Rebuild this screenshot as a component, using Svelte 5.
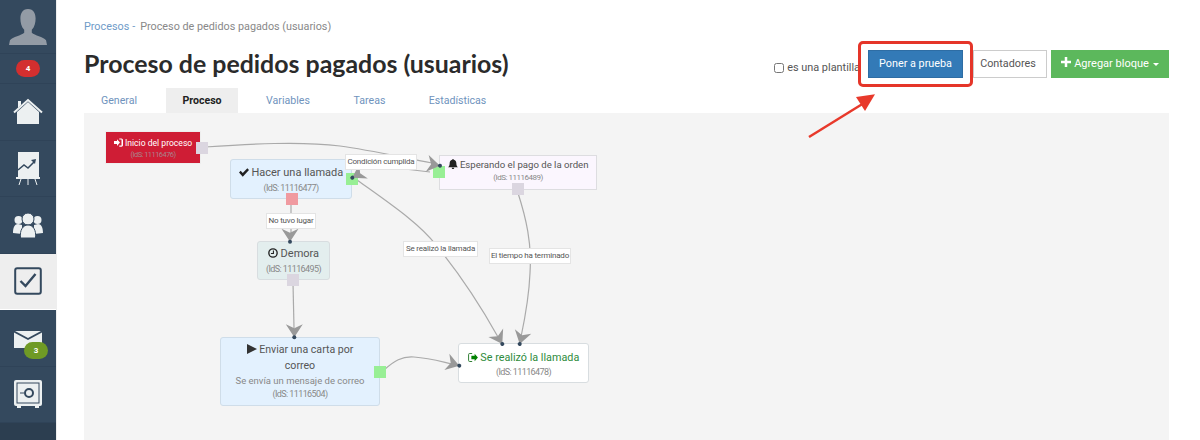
<script>
  const tabs = [
    { name: 'General', w: 70 },
    { name: 'Proceso', w: 72 },
    { name: 'Variables', w: 76 },
    { name: 'Tareas', w: 63 },
    { name: 'Estadísticas', w: 89 }
  ];

  // node boxes, relative to the canvas (84, 113)
  const nodes = [
    { id: 'start', icon: 'in', title: 'Inicio del proceso', ids: '(IdS: 11116476)', x: 21, y: 18, w: 96, h: 33 },
    { id: 'call', icon: 'check', title: 'Hacer una llamada', ids: '(IdS: 11116477)', x: 146, y: 46, w: 122, h: 40 },
    { id: 'wait', icon: 'bell', title: 'Esperando el pago de la orden', ids: '(IdS: 11116489)', x: 355, y: 42, w: 158, h: 35 },
    { id: 'delay', icon: 'clock', title: 'Demora', ids: '(IdS: 11116495)', x: 173, y: 128, w: 73, h: 39 },
    { id: 'mail', icon: 'play', title: 'Enviar una carta por correo', sub: 'Se envía un mensaje de correo', ids: '(IdS: 11116504)', x: 136, y: 224, w: 160, h: 69 },
    { id: 'end', icon: 'out', title: 'Se realizó la llamada', ids: '(IdS: 11116478)', x: 374, y: 230, w: 131, h: 40 }
  ];

  const ports = [
    { x: 112, y: 29, c: '#dbd6e0' },
    { x: 262, y: 60, c: '#98ef95' },
    { x: 202, y: 80, c: '#f09aa0' },
    { x: 349, y: 53, c: '#98ef95' },
    { x: 428, y: 70, c: '#dbd6e0' },
    { x: 203, y: 161, c: '#dbd6e0' },
    { x: 290, y: 253, c: '#98ef95' }
  ];

  const labels = [
    { text: 'Condición cumplida', x: 261, y: 41, w: 72 },
    { text: 'No tuvo lugar', x: 182, y: 100, w: 50 },
    { text: 'Se realizó la llamada', x: 319, y: 128, w: 75 },
    { text: 'El tiempo ha terminado', x: 405, y: 135, w: 82 }
  ];

  const edges = [
    'M121 34 C166 31 216 28 256 33 C286 37 316 44 348 50',
    'M270 50 L346 59',
    'M207 90 L207 122',
    'M434 80 C442 105 448 130 446 160 C445 185 441 205 437 224',
    'M209 170 L210 215',
    'M273 67 C305 90 335 110 352 132 C375 160 395 190 414 224',
    'M300 257 C310 248 318 243 330 244 C345 245 355 248 368 251'
  ];

  // arrow heads: tip point and rotation in degrees
  const heads = [
    { x: 356, y: 52.700, r: 100 },
    { x: 206, y: 128.700, r: 180 },
    { x: 268.300, y: 64.700, r: -120 },
    { x: 418.300, y: 231, r: 150 },
    { x: 435.700, y: 231, r: 195 },
    { x: 210.300, y: 224.300, r: 180 },
    { x: 375.300, y: 252.700, r: 107 }
  ];
</script>

<div class="page">
  <aside class="side">
    <div class="side-item avatar">
      <svg viewBox="0 0 40 40" width="38" height="38"><path fill="#939ba5" d="M20 1c6 0 8 5 8 10 0 4-1 9-4 12v3c3 3 12 4 15 8l1 5H0l1-5c3-4 12-5 15-8v-3c-3-3-4-8-4-12 0-5 2-10 8-10z"/></svg>
    </div>
    <div class="side-item count"><span class="pill">4</span></div>
    <div class="side-item">
      <svg viewBox="0 0 30 27" width="30" height="27"><path fill="#ecf0f1" d="M4 14 15 4l11 10v12H4z"/><path fill="none" stroke="#ecf0f1" stroke-width="2" d="M1 14.500 15 2l14 12.500"/><path fill="#ecf0f1" d="M5 3h3v4l-3 3z"/></svg>
    </div>
    <div class="side-item">
      <svg viewBox="0 0 24 33" width="24" height="33"><path fill="#ecf0f1" d="M2 0h21v25H2z"/><path fill="none" stroke="#34495e" stroke-width="1.500" d="M2 18l6-5 4 3 6-6"/><path fill="#34495e" d="M15 8l5-1-1 5z"/><path fill="#ecf0f1" d="M0 25h24v2H0z"/><path stroke="#ecf0f1" fill="none" d="M5 27l-2 6M12 27v6M19 27l2 6"/></svg>
    </div>
    <div class="side-item">
      <svg viewBox="0 0 30 26" width="30" height="26"><g fill="#ecf0f1"><circle cx="5.500" cy="8" r="4"/><circle cx="24.500" cy="8" r="4"/><path d="M0 21c0-6 2-9 5-9l4 1v9zM30 21c0-6-2-9-5-9l-4 1v9z"/><g stroke="#34495e"><circle cx="15" cy="7" r="6"/><path d="M7.500 26c-1-8 2.500-13 7.500-13s8.500 5 7.500 13z"/></g></g></svg>
    </div>
    <div class="side-item active">
      <svg viewBox="0 0 28 28" width="28" height="28"><rect x="1.200" y="1.200" width="25.600" height="25.600" rx="2" fill="none" stroke="#34495e" stroke-width="2"/><path fill="none" stroke="#34495e" stroke-width="2.400" d="M6.500 14l5 5 10-12"/></svg>
    </div>
    <div class="side-item">
      <svg class="env" viewBox="0 0 28 17" width="28" height="17"><path fill="#ecf0f1" d="M0 1.500 14 9l14-7.500V17H0zM1 0h26L14 7z"/></svg>
      <span class="pill green">3</span>
    </div>
    <div class="side-item">
      <svg viewBox="0 0 28 28" width="28" height="28"><rect x="0" y="0" width="28" height="26" rx="2" fill="#ecf0f1"/><rect x="3" y="3" width="22" height="20" fill="none" stroke="#34495e" stroke-width="1"/><circle cx="15" cy="13" r="4" fill="none" stroke="#34495e" stroke-width="2"/><path stroke="#34495e" d="M6 13h4"/><path fill="#ecf0f1" d="M3 26h4v2H3zM21 26h4v2h-4z"/></svg>
    </div>
  </aside>

  <main class="main">
    <div class="crumbs"><a href="#p">Procesos</a><span class="dash">-</span><span>Proceso de pedidos pagados (usuarios)</span></div>

    <div class="head">
      <h1>Proceso de pedidos pagados (usuarios)</h1>
      <div class="actions">
        <label class="tpl"><input type="checkbox" />es una plantilla</label>
        <div class="marked">
          <button class="btn blue">Poner a prueba</button>
          <span class="mark"></span>
        </div>
        <button class="btn plain">Contadores</button>
        <button class="btn green">
          <svg viewBox="0 0 12 12" width="10" height="10"><path fill="#fff" d="M4.500 0h3v4.500H12v3H7.500V12h-3V7.500H0v-3h4.500z"/></svg>
          Agregar bloque
          <i class="caret"></i>
        </button>
      </div>
    </div>

    <nav class="tabs">
      {#each tabs as tab}
        <span class="tab" class:current={tab.name === 'Proceso'} style="width:{tab.w}px">{tab.name}</span>
      {/each}
    </nav>

    <section class="canvas">
      <svg class="wires" width="1085" height="327">
        {#each edges as d}
          <path {d} fill="none" stroke="#aaa" stroke-width="1.200" />
        {/each}
      </svg>

      {#each nodes as n}
        <div class="node {n.id}" style="left:{n.x}px;top:{n.y}px;width:{n.w}px;height:{n.h}px">
          <div class="title">
            {#if n.icon === 'in'}
              <svg viewBox="0 0 12 11" width="9" height="9"><path fill="#fff" d="M0 3.500h4V1l4 4.500L4 10V7.500H0zM7 0h3c1 0 2 1 2 2v7c0 1-1 2-2 2H7V9.500h3V1.500H7z"/></svg>
            {:else if n.icon === 'check'}
              <svg viewBox="0 0 12 10" width="10" height="9"><path fill="#222" d="M0 5l2-2 2.500 2.500L10 0l2 2-7.500 8z"/></svg>
            {:else if n.icon === 'bell'}
              <svg viewBox="0 0 12 12" width="10" height="10"><path fill="#222" d="M6 0c1 0 1 1 1 1 2 .5 3 2 3 4 0 3 1 4 2 5H0c1-1 2-2 2-5 0-2 1-3.500 3-4 0 0 0-1 1-1zM4.500 10.500h3C7.500 11.500 7 12 6 12s-1.500-.5-1.500-1.500z"/></svg>
            {:else if n.icon === 'clock'}
              <svg viewBox="0 0 12 12" width="10" height="10"><circle cx="6" cy="6" r="5" fill="none" stroke="#222" stroke-width="1.600"/><path fill="none" stroke="#222" stroke-width="1.300" d="M6.500 3v3.500H3.500"/></svg>
            {:else if n.icon === 'play'}
              <svg viewBox="0 0 10 10" width="10" height="10"><path fill="#333" d="M0 0l10 5-10 5z"/></svg>
            {:else if n.icon === 'out'}
              <svg viewBox="0 0 12 11" width="10" height="9"><path fill="none" stroke="#2e7d32" stroke-width="1.200" d="M5 .6H2C1 .6.600 1 .600 2v7c0 1 .4 1.400 1.400 1.400h3"/><path fill="#008000" d="M4 3.500h4V1l4 4.500L8 10V7.500H4z"/></svg>
            {/if}
            {n.title}
          </div>
          {#if n.sub}<div class="sub">{n.sub}</div>{/if}
          <div class="ids">{n.ids}</div>
        </div>
      {/each}

      {#each ports as p}
        <span class="port" style="left:{p.x}px;top:{p.y}px;background:{p.c}"></span>
      {/each}

      <svg class="wires" width="1085" height="327">
        {#each heads as h}
          <g transform="translate({h.x} {h.y}) rotate({h.r})">
            <path d="M0 0 L-8.500 13 L0 9 L8.500 13 Z" fill="#999" />
            <circle cx="0" cy="0" r="2" fill="#34495e" />
          </g>
        {/each}
      </svg>

      {#each labels as l}
        <span class="edge-label" style="left:{l.x}px;top:{l.y}px;width:{l.w}px">{l.text}</span>
      {/each}
    </section>

    <svg class="pointer" width="80" height="50" viewBox="0 0 80 50">
      <path d="M1 47 L56 13" stroke="#e8392b" stroke-width="2.500" fill="none" />
      <path d="M67 4.300 L48 7 L57 21 Z" fill="#e8392b" />
    </svg>
  </main>
</div>

<style>
  :global(body) {
    margin: 0;
    background: #fff;
    font-family: Roboto, "Liberation Sans", sans-serif;
  }

  .page {
    display: flex;
    height: 440px;
    overflow: hidden;
  }

  .side {
    width: 56px;
    flex: none;
    background: #2c3e50;
    border-right: 1px solid #eee;
    display: flex;
    flex-direction: column;
  }

  .side-item {
    box-sizing: border-box;
    background: #34495e;
    border-bottom: 1px solid #2f4358;
    display: flex;
    align-items: center;
    justify-content: center;
    height: 56.500px;
    flex: none;
    position: relative;
  }

  .avatar { height: 54px; }
  .count { height: 30px; }
  .active { background: #eee; border-bottom-color: #fff; }
  .env { margin-top: 3px; }

  .pill {
    box-sizing: border-box;
    width: 24px;
    height: 17px;
    text-align: center;
    background: #d32f2f;
    color: #fff;
    font-size: 8px;
    font-weight: 700;
    border-radius: 9px;
    line-height: 17px;
  }

  .pill.green {
    background: #6f9a25;
    position: absolute;
    left: 24px;
    top: 32px;
  }

  .main {
    flex: 1;
    padding-left: 27px;
    padding-right: 31px;
    position: relative;
    min-width: 0;
  }

  .crumbs {
    margin-top: 19px;
    font-size: 10.800px;
    line-height: 16px;
    color: #888;
  }

  .crumbs a { color: #6f9bc8; text-decoration: none; }
  .dash { margin: 0 5px 0 3px; color: #6f9bc8; }

  .head {
    display: flex;
    justify-content: space-between;
    align-items: center;
    height: 42px;
    margin-top: 7px;
  }

  h1 {
    margin: 0;
    font-family: Lato, "Liberation Sans", sans-serif;
    font-size: 24.900px;
    font-weight: 700;
    color: #2b2b2b;
  }

  .actions {
    display: flex;
    align-items: center;
    position: relative;
    margin-top: 1px;
  }

  .tpl {
    font-size: 10.900px;
    color: #555;
    display: flex;
    align-items: center;
    margin-top: 8px;
    margin-right: 8px;
  }

  .tpl input { margin: 0 3px 0 0; width: 10px; height: 10px; }

  .marked { position: relative; display: flex; margin-right: 10px; }

  .btn {
    height: 28px;
    font: inherit;
    font-size: 10.800px;
    border: 1px solid #ccc;
    padding: 0;
    background: #fff;
    color: #555;
  }

  .btn.blue { background: #337ab7; border-color: #2e6da4; color: #fff; width: 95px; }
  .btn.plain { width: 74px; margin-right: 4px; padding-right: 4px; }
  .btn.green { background: #5cb85c; border-color: #5cb85c; color: #fff; width: 118px; font-size: 11px; }

  .caret {
    display: inline-block;
    border-left: 3.500px solid transparent;
    border-right: 3.500px solid transparent;
    border-top: 3.500px solid #fff;
    vertical-align: middle;
    margin-left: 1px;
  }

  .mark {
    position: absolute;
    left: -10px;
    top: -9px;
    width: 109px;
    height: 40px;
    border: 3px solid #e53529;
    border-radius: 5px;
    pointer-events: none;
  }

  .tabs {
    display: flex;
    gap: 12px;
    margin-top: 4px;
    height: 25px;
  }

  .tab {
    font-size: 10.600px;
    color: #6f93bd;
    line-height: 25px;
    text-align: center;
  }

  .tab.current {
    background: #eee;
    color: #222;
    font-weight: 700;
  }

  .canvas {
    position: relative;
    background: #f4f4f4;
    height: 327px;
    width: 1085px;
  }

  .wires { position: absolute; left: 0; top: 0; }

  .node {
    position: absolute;
    box-sizing: border-box;
    border: 1px solid #d8dde0;
    border-radius: 3px;
    text-align: center;
    color: #555;
    padding: 5px 0 0;
  }

  .title { font-size: 11px; line-height: 16px; }
  .title svg { vertical-align: -1px; }
  .ids { font-size: 9px; letter-spacing: -0.600px; line-height: 14px; color: #888; }
  .sub { font-size: 9.500px; line-height: 14px; color: #888; }

  .node.start { background: #cf1d35; border-color: #eee; border-radius: 0; padding-top: 4px; }
  .node.start .title { color: #fff; font-size: 8.600px; line-height: 14px; }
  .node.start .ids { color: #a9838d; font-size: 7.500px; letter-spacing: -0.550px; line-height: 10px; }
  .node.call { background: #e3f1fe; border-color: #cfdde9; }
  .node.wait { background: #fbf6fe; border-radius: 0; border-color: #dddde0; padding-top: 2px; }
  .node.wait .title { font-size: 9.600px; line-height: 14px; }
  .node.wait .ids { font-size: 8px; letter-spacing: -0.500px; line-height: 12px; }
  .node.delay { background: #e3eeee; padding-top: 4px; }
  .node.mail { background: #e3f1fe; border-color: #cfdde9; padding: 4px 15px 0; }
  .node.mail .title { font-size: 10.600px; }
  .node.mail .sub { margin: 0 -15px; }
  .node.mail .ids { line-height: 13px; }
  .node.end { background: #fff; padding-top: 6px; }
  .node.end .title { color: #2e8b3c; font-size: 10.800px; }
  .node.end .ids { line-height: 13px; }

  .port {
    position: absolute;
    width: 12px;
    height: 12px;
  }

  .edge-label {
    position: absolute;
    box-sizing: border-box;
    background: #fff;
    border: 1px solid #e4e4e4;
    font-size: 8px;
    letter-spacing: -0.200px;
    line-height: 14px;
    height: 16px;
    text-align: center;
    color: #555;
    white-space: nowrap;
  }

  .pointer {
    position: absolute;
    left: 751px;
    top: 90px;
  }
</style>
